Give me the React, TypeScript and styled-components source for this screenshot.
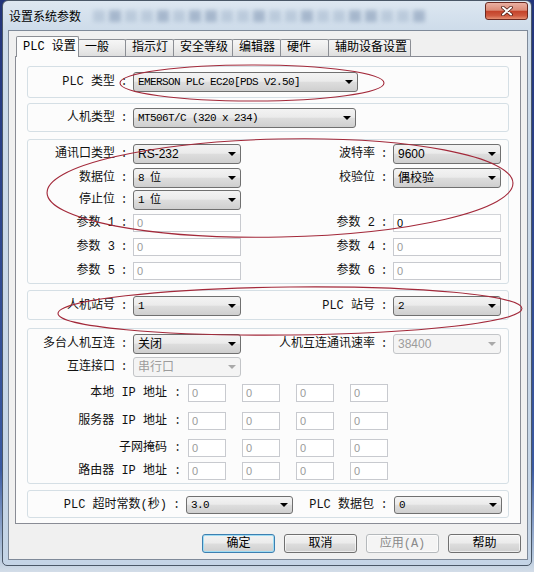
import React from 'react';
import styled, { createGlobalStyle } from 'styled-components';

const MONO = `"Liberation Mono", "Noto Sans CJK SC", monospace`;
const SANS = `"Liberation Sans", "Noto Sans CJK SC", sans-serif`;

const GlobalStyle = createGlobalStyle`
  html, body {
    margin: 0;
    padding: 0;
  }
  body {
    width: 534px;
    height: 572px;
    overflow: hidden;
    font-family: "Noto Sans CJK SC", sans-serif;
    font-size: 12px;
    color: #000;
  }
`;

const Desktop = styled.div`
  position: relative;
  width: 534px;
  height: 572px;
  box-sizing: border-box;
  padding-left: 2px;
  background: linear-gradient(to bottom, #22347a 0%, #3a5aa2 82%, #b2c5db 97%, #d3dde8 100%);
`;

const Window = styled.div`
  width: 530px;
  height: 566px;
  box-sizing: border-box;
  border: 1px solid #4a5767;
  border-radius: 6px 6px 5px 5px;
  background: linear-gradient(to bottom, #dde7f1 0px, #cedcea 28px, #c4d4e6 100%);
  display: flex;
  flex-direction: column;
`;

const TitleBar = styled.div`
  height: 29px;
  display: flex;
  align-items: center;
  padding-left: 6px;
  flex-shrink: 0;
`;

const Title = styled.span`
  font-size: 12px;
  line-height: 14px;
  color: #000;
`;

const Smudges = styled.div`
  flex: 1;
  display: flex;
  align-items: center;
  gap: 4px;
  margin-left: 12px;
  opacity: 0.45;
`;

const Smudge = styled.span<{ $dark?: boolean }>`
  width: 12px;
  height: 12px;
  background: ${(p) => (p.$dark ? '#6f86a6' : '#9db0c7')};
  filter: blur(2px);
`;

const CloseButton = styled.div`
  align-self: flex-start;
  margin: 1px 3px 0 26px;
  width: 43px;
  height: 18px;
  box-sizing: border-box;
  border: 1px solid #6b2a22;
  border-radius: 3px;
  background: linear-gradient(to bottom, #eab0a2 0%, #dc8c78 45%, #c4432b 52%, #cf5a40 80%, #e69174 100%);
  display: flex;
  align-items: center;
  justify-content: center;
`;

const Client = styled.div`
  height: 530px;
  margin: 0 3px 0 5px;
  box-sizing: border-box;
  border: 1px solid #7f8a99;
  background: #f0f0f0;
  padding: 5px 6px 0 6px;
  display: flex;
  flex-direction: column;
`;

const TabStrip = styled.div`
  display: flex;
  align-items: flex-end;
  height: 21px;
  margin-bottom: -1px;
  padding-left: 1px;
  position: relative;
  z-index: 1;
`;

const Tab = styled.div<{ $w: number; $active?: boolean }>`
  width: ${(p) => p.$w}px;
  height: ${(p) => (p.$active ? 21 : 17)}px;
  margin-bottom: ${(p) => (p.$active ? 0 : 1)}px;
  margin-left: -1px;
  &:first-child {
    margin-left: 0;
  }
  box-sizing: border-box;
  border: 1px solid #8b8e94;
  border-bottom: none;
  border-radius: 2px 2px 0 0;
  background: ${(p) =>
    p.$active ? '#fcfcfc' : 'linear-gradient(to bottom, #f6f6f6 0%, #ececec 50%, #dedede 100%)'};
  position: relative;
  z-index: ${(p) => (p.$active ? 2 : 1)};
  padding-left: 6px;
  padding-top: ${(p) => (p.$active ? 3 : 1)}px;
  font-family: ${MONO};
  font-size: 12px;
  line-height: 14px;
  white-space: nowrap;
`;

const Pane = styled.div`
  height: 468px;
  box-sizing: border-box;
  border: 1px solid #898c95;
  background: #fcfcfc;
  padding: 9px 11px 0 11px;
`;

const Group = styled.div<{ $h: number; $mt?: number }>`
  height: ${(p) => p.$h}px;
  margin-top: ${(p) => p.$mt ?? 0}px;
  box-sizing: border-box;
  border: 1px solid #d5dfe5;
  border-radius: 3px;
  overflow: hidden;
`;

const Row = styled.div<{ $cols: string; $h?: number; $mt?: number }>`
  display: grid;
  grid-template-columns: ${(p) => p.$cols};
  align-items: center;
  height: ${(p) => p.$h ?? 20}px;
  margin-top: ${(p) => p.$mt ?? 0}px;
`;

const Label = styled.span`
  font-family: ${MONO};
  font-size: 12px;
  line-height: 14px;
  text-align: right;
  white-space: nowrap;
  color: #111;
`;

const Colon = styled.span`
  font-family: ${MONO};
  font-size: 12px;
  line-height: 14px;
  text-align: center;
  color: #333;
`;

const ComboShell = styled.div<{ $h: number; $disabled?: boolean; $mono?: boolean }>`
  height: ${(p) => p.$h}px;
  box-sizing: border-box;
  display: flex;
  align-items: center;
  padding-left: 4px;
  border: 1px solid ${(p) => (p.$disabled ? '#c3c5c8' : '#707070')};
  border-radius: 3px;
  background: ${(p) =>
    p.$disabled
      ? '#f4f4f4'
      : 'linear-gradient(to bottom, #f3f3f3 0%, #ebebeb 45%, #dddddd 52%, #cfcfcf 100%)'};
  color: ${(p) => (p.$disabled ? '#9c9c9c' : '#000')};
  font-family: ${(p) => (p.$mono ? MONO : SANS)};
  font-size: ${(p) => (p.$mono ? 11 : 12)}px;
  letter-spacing: ${(p) => (p.$mono ? '-0.6px' : '0')};
  line-height: 14px;
  white-space: nowrap;
  overflow: hidden;
`;

const Arrow = styled.span<{ $disabled?: boolean }>`
  margin-left: auto;
  margin-right: 4px;
  width: 0;
  height: 0;
  flex-shrink: 0;
  border-left: 4px solid transparent;
  border-right: 4px solid transparent;
  border-top: 4px solid ${(p) => (p.$disabled ? '#a9a9a9' : '#000')};
`;

const ComboBox: React.FC<{ value: string; h?: number; disabled?: boolean; mono?: boolean }> = ({
  value,
  h = 20,
  disabled,
  mono,
}) => (
  <ComboShell $h={h} $disabled={disabled} $mono={mono}>
    <span>{value}</span>
    <Arrow $disabled={disabled} />
  </ComboShell>
);

const TextBox = styled.div<{ $dim?: boolean; $w?: number }>`
  width: ${(p) => (p.$w ? `${p.$w}px` : 'auto')};
  height: 18px;
  box-sizing: border-box;
  border: 1px solid ${(p) => (p.$dim ? '#c8cacf' : '#d2d4d8')};
  background: #fff;
  padding-left: 3px;
  display: flex;
  align-items: center;
  font-family: ${SANS};
  font-size: 11px;
  color: ${(p) => (p.$dim ? '#9a9a9a' : '#000')};
`;

const IpGroup = styled.div`
  display: flex;
  gap: 16px;
`;

const ButtonBar = styled.div`
  display: flex;
  justify-content: flex-end;
  gap: 9px;
  margin-top: 10px;
`;

const Button = styled.div<{ $default?: boolean; $disabled?: boolean }>`
  width: 73px;
  height: 19px;
  box-sizing: border-box;
  border: 1px solid ${(p) => (p.$default ? '#3c7fb1' : p.$disabled ? '#b5b9bc' : '#707070')};
  border-radius: 3px;
  background: ${(p) =>
    p.$disabled
      ? '#f4f4f4'
      : 'linear-gradient(to bottom, #f2f2f2 0%, #ebebeb 48%, #dddddd 52%, #cfcfcf 100%)'};
  box-shadow: ${(p) => (p.$default ? 'inset 0 0 0 1px #9fdcf3' : 'inset 0 0 0 1px rgba(255,255,255,0.6)')};
  color: ${(p) => (p.$disabled ? '#8a8a8a' : '#000')};
  font-family: ${MONO};
  font-size: 12px;
  line-height: 14px;
  display: flex;
  align-items: center;
  justify-content: center;
`;

const Marks = styled.svg`
  position: absolute;
  left: 0;
  top: 0;
  width: 534px;
  height: 572px;
  pointer-events: none;
  fill: none;
  stroke: #a3293a;
  stroke-width: 1.1;
`;

const COLS_TWO = '87px 18px 108px 134px 18px 108px';
const COLS_IP = '139px 21px auto';
const COLS_LAST = '139px 19px 107px 81px 20px 108px';

const smudges = [0, 1, 0, 0, 1, 0, 1, 1, 0, 0, 1, 0, 0, 1, 0, 0, 1, 1, 0, 0, 1];
const tabs = [
  { label: 'PLC 设置', w: 63, active: true },
  { label: '一般', w: 48 },
  { label: '指示灯', w: 49 },
  { label: '安全等级', w: 60 },
  { label: '编辑器', w: 49 },
  { label: '硬件', w: 49 },
  { label: '辅助设备设置', w: 83 },
];

const IpRow: React.FC<{ label: string; mt: number }> = ({ label, mt }) => (
  <Row $cols={COLS_IP} $h={18} $mt={mt}>
    <Label>{label}</Label>
    <Colon>:</Colon>
    <IpGroup>
      {[0, 1, 2, 3].map((i) => (
        <TextBox key={i} $dim $w={38}>
          0
        </TextBox>
      ))}
    </IpGroup>
  </Row>
);

const App: React.FC = () => (
  <Desktop>
    <GlobalStyle />
    <Window>
      <TitleBar>
        <Title>设置系统参数</Title>
        <Smudges>
          {smudges.map((d, i) => (
            <Smudge key={i} $dark={d === 1} />
          ))}
        </Smudges>
        <CloseButton>
          <svg width="12" height="10" viewBox="0 0 12 10">
            <path d="M2 1.5 L10 8.5 M10 1.5 L2 8.5" stroke="#4a1a12" strokeWidth="3.6" strokeLinecap="round" />
            <path d="M2 1.5 L10 8.5 M10 1.5 L2 8.5" stroke="#fff" strokeWidth="2" strokeLinecap="round" />
          </svg>
        </CloseButton>
      </TitleBar>

      <Client>
        <TabStrip>
          {tabs.map((t) => (
            <Tab key={t.label} $w={t.w} $active={t.active}>
              {t.label}
            </Tab>
          ))}
        </TabStrip>

        <Pane>
          <Group $h={32}>
            <Row $cols="87px 18px 225px" $mt={5}>
              <Label>PLC 类型</Label>
              <Colon>:</Colon>
              <ComboBox value="EMERSON PLC EC20[PDS V2.50]" mono />
            </Row>
          </Group>

          <Group $h={29} $mt={5}>
            <Row $cols="87px 18px 223px" $mt={4}>
              <Label>人机类型</Label>
              <Colon>:</Colon>
              <ComboBox value="MT506T/C (320 x 234)" mono />
            </Row>
          </Group>

          <Group $h={145} $mt={7}>
            <Row $cols={COLS_TWO} $mt={4}>
              <Label>通讯口类型</Label>
              <Colon>:</Colon>
              <ComboBox value="RS-232" />
              <Label>波特率</Label>
              <Colon>:</Colon>
              <ComboBox value="9600" />
            </Row>
            <Row $cols={COLS_TWO} $mt={4}>
              <Label>数据位</Label>
              <Colon>:</Colon>
              <ComboBox value="8 位" mono />
              <Label>校验位</Label>
              <Colon>:</Colon>
              <ComboBox value="偶校验" />
            </Row>
            <Row $cols={COLS_TWO} $mt={2}>
              <Label>停止位</Label>
              <Colon>:</Colon>
              <ComboBox value="1 位" mono />
            </Row>
            <Row $cols={COLS_TWO} $h={18} $mt={4}>
              <Label>参数 1</Label>
              <Colon>:</Colon>
              <TextBox $dim>0</TextBox>
              <Label>参数 2</Label>
              <Colon>:</Colon>
              <TextBox>0</TextBox>
            </Row>
            <Row $cols={COLS_TWO} $h={18} $mt={6}>
              <Label>参数 3</Label>
              <Colon>:</Colon>
              <TextBox $dim>0</TextBox>
              <Label>参数 4</Label>
              <Colon>:</Colon>
              <TextBox $dim>0</TextBox>
            </Row>
            <Row $cols={COLS_TWO} $h={18} $mt={6}>
              <Label>参数 5</Label>
              <Colon>:</Colon>
              <TextBox $dim>0</TextBox>
              <Label>参数 6</Label>
              <Colon>:</Colon>
              <TextBox $dim>0</TextBox>
            </Row>
          </Group>

          <Group $h={30} $mt={6}>
            <Row $cols={COLS_TWO} $mt={5}>
              <Label>人机站号</Label>
              <Colon>:</Colon>
              <ComboBox value="1" mono />
              <Label>PLC 站号</Label>
              <Colon>:</Colon>
              <ComboBox value="2" mono />
            </Row>
          </Group>

          <Group $h={156} $mt={8}>
            <Row $cols={COLS_TWO} $mt={5}>
              <Label>多台人机互连</Label>
              <Colon>:</Colon>
              <ComboBox value="关闭" />
              <Label>人机互连通讯速率</Label>
              <Colon>:</Colon>
              <ComboBox value="38400" disabled />
            </Row>
            <Row $cols={COLS_TWO} $mt={3}>
              <Label>互连接口</Label>
              <Colon>:</Colon>
              <ComboBox value="串行口" disabled />
            </Row>
            <IpRow label="本地 IP 地址" mt={7} />
            <IpRow label="服务器 IP 地址" mt={10} />
            <IpRow label="子网掩码" mt={9} />
            <IpRow label="路由器 IP 地址" mt={5} />
          </Group>

          <Group $h={28} $mt={6}>
            <Row $cols={COLS_LAST} $h={18} $mt={5}>
              <Label>PLC 超时常数(秒)</Label>
              <Colon>:</Colon>
              <ComboBox value="3.0" h={18} mono />
              <Label>PLC 数据包</Label>
              <Colon>:</Colon>
              <ComboBox value="0" h={18} mono />
            </Row>
          </Group>
        </Pane>

        <ButtonBar>
          <Button $default>确定</Button>
          <Button>取消</Button>
          <Button $disabled>应用(A)</Button>
          <Button>帮助</Button>
        </ButtonBar>
      </Client>
    </Window>

    <Marks viewBox="0 0 534 572">
      <ellipse cx="252" cy="83" rx="132" ry="18" />
      <ellipse cx="280" cy="188" rx="233" ry="49" transform="rotate(-1.2 280 188)" />
      <ellipse cx="290" cy="311" rx="232" ry="24" transform="rotate(-0.6 290 311)" />
    </Marks>
  </Desktop>
);

export default App;
